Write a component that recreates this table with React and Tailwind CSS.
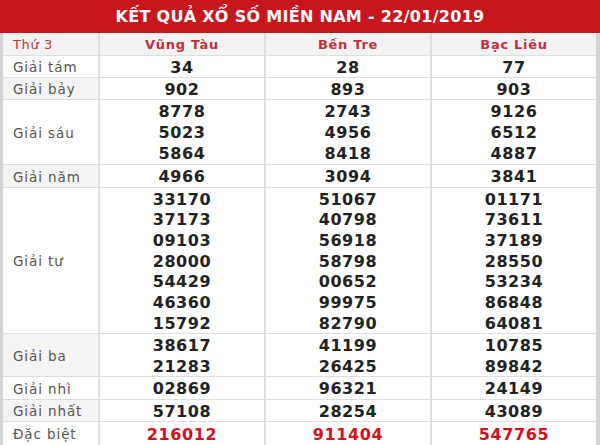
import React from "react";

const rows = [
  { label: "Giải tám", h: "h-[21px]", vals: [["34"], ["28"], ["77"]] },
  { label: "Giải bảy", h: "h-[21px]", vals: [["902"], ["893"], ["903"]] },
  { label: "Giải sáu", h: "h-[64px]", vals: [["8778", "5023", "5864"], ["2743", "4956", "8418"], ["9126", "6512", "4887"]] },
  { label: "Giải năm", h: "h-[22px]", vals: [["4966"], ["3094"], ["3841"]] },
  {
    label: "Giải tư",
    h: "h-[145px]",
    vals: [
      ["33170", "37173", "09103", "28000", "54429", "46360", "15792"],
      ["51067", "40798", "56918", "58798", "00652", "99975", "82790"],
      ["01171", "73611", "37189", "28550", "53234", "86848", "64081"],
    ],
  },
  { label: "Giải ba", h: "h-[42px]", vals: [["38617", "21283"], ["41199", "26425"], ["10785", "89842"]] },
  { label: "Giải nhì", h: "h-[22px]", vals: [["02869"], ["96321"], ["24149"]] },
  { label: "Giải nhất", h: "h-[21px]", vals: [["57108"], ["28254"], ["43089"]] },
  { label: "Đặc biệt", h: "h-[23px]", vals: [["216012"], ["911404"], ["547765"]], special: true },
];

export default function App() {
  return (
    <div className="w-[600px] h-[445px] overflow-hidden bg-white font-['DejaVu_Sans',sans-serif]">
      <div className="h-[33px] bg-[#c8161e] flex items-center justify-center text-white font-bold text-[16px] tracking-[0.3px]">
        KẾT QUẢ XỔ SỐ MIỀN NAM - 22/01/2019
      </div>
      <div className="border-l-[3px] border-r-[4px] border-[#d4d4d4] bg-[#dedede]">
        <div className="grid grid-cols-[95px_164px_164px_164px] gap-x-[2px] gap-y-[1px]">
          <div className="h-[22px] bg-[#f3f3f3] flex items-center pl-[10px] pt-[2px] text-[13px] tracking-[0.6px] text-[#c0303a]">Thứ 3</div>
          {["Vũng Tàu", "Bến Tre", "Bạc Liêu"].map((s) => (
            <div key={s} className="h-[22px] bg-[#f3f3f3] flex items-center justify-center pt-[2px] text-[13px] tracking-[0.7px] text-[#c0303a] font-semibold">
              {s}
            </div>
          ))}
          {rows.map((r, i) => (
            <React.Fragment key={r.label}>
              <div
                className={`${r.h} ${i % 2 === 1 ? "bg-[#f4f4f4]" : "bg-white"} flex items-center pl-[10px] pt-[2px] text-[13.5px] text-[#555] tracking-[0.9px]`}
              >
                {r.label}
              </div>
              {r.vals.map((col, j) => (
                <div
                  key={j}
                  className={`${r.h} bg-white flex flex-col items-center justify-center pt-[3px] text-[16px] font-bold leading-[20.7px] tracking-[0.6px] ${r.special ? "text-[#d0101c]" : "text-[#222]"}`}
                >
                  {col.map((v, k) => (
                    <div key={k}>{v}</div>
                  ))}
                </div>
              ))}
            </React.Fragment>
          ))}
        </div>
      </div>
    </div>
  );
}
